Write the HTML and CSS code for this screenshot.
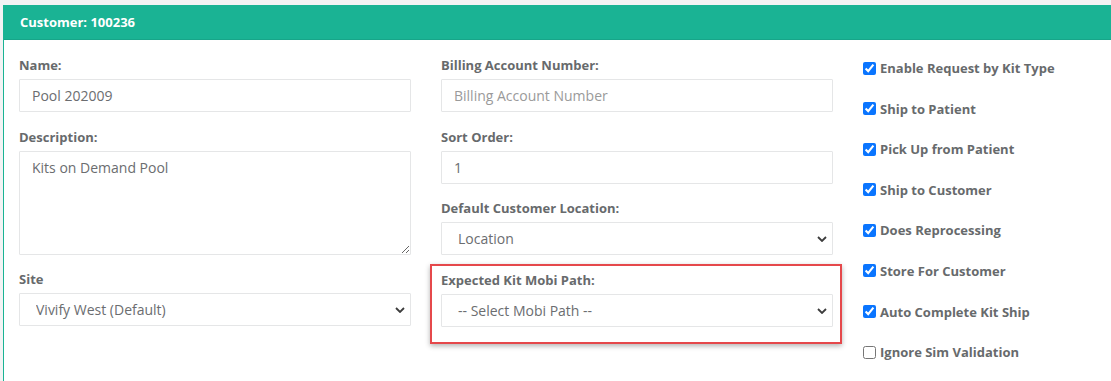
FILE: index.html
```html
<!DOCTYPE html>
<html lang="en">
<head>
  <meta charset="UTF-8" />
  <title>Customer 100236</title>
  <link rel="stylesheet" href="styles.css">
</head>
<body>
  <section class="card">
    <header class="card-head">Customer: 100236</header>

    <form class="card-body">
      <div class="col">
        <div class="form-group">
          <label>Name:</label>
          <input class="field" type="text" value="Pool 202009">
        </div>
        <div class="form-group">
          <label>Description:</label>
          <textarea class="field area">Kits on Demand Pool</textarea>
        </div>
        <div class="form-group">
          <label>Site</label>
          <div class="select-wrap">
            <select class="field">
              <option>Vivify West (Default)</option>
            </select>
            <svg class="chev" viewBox="0 0 10 6" width="10" height="6"><path d="M1 1l4 4 4-4" fill="none" stroke="#3c3c3c" stroke-width="1.8"/></svg>
          </div>
        </div>
      </div>

      <div class="col">
        <div class="form-group">
          <label>Billing Account Number:</label>
          <input class="field" type="text" placeholder="Billing Account Number">
        </div>
        <div class="form-group">
          <label>Sort Order:</label>
          <input class="field" type="text" value="1">
        </div>
        <div class="form-group">
          <label>Default Customer Location:</label>
          <div class="select-wrap">
            <select class="field">
              <option>Location</option>
            </select>
            <svg class="chev" viewBox="0 0 10 6" width="10" height="6"><path d="M1 1l4 4 4-4" fill="none" stroke="#3c3c3c" stroke-width="1.8"/></svg>
          </div>
        </div>
        <div class="form-group marked">
          <label>Expected Kit Mobi Path:</label>
          <div class="select-wrap">
            <select class="field">
              <option>-- Select Mobi Path --</option>
            </select>
            <svg class="chev" viewBox="0 0 10 6" width="10" height="6"><path d="M1 1l4 4 4-4" fill="none" stroke="#3c3c3c" stroke-width="1.8"/></svg>
          </div>
        </div>
      </div>

      <div class="col checks">
        <label class="check"><input type="checkbox" checked> Enable Request by Kit Type</label>
        <label class="check"><input type="checkbox" checked> Ship to Patient</label>
        <label class="check"><input type="checkbox" checked> Pick Up from Patient</label>
        <label class="check"><input type="checkbox" checked> Ship to Customer</label>
        <label class="check"><input type="checkbox" checked> Does Reprocessing</label>
        <label class="check"><input type="checkbox" checked> Store For Customer</label>
        <label class="check"><input type="checkbox" checked> Auto Complete Kit Ship</label>
        <label class="check"><input type="checkbox"> Ignore Sim Validation</label>
      </div>
    </form>
  </section>
</body>
</html>
```

FILE: styles.css
```css
* { box-sizing: border-box; }

body {
  margin: 0;
  padding: 5px 0 0 3px;
  background: #f3f3f4;
  font-family: 'Open Sans', 'Liberation Sans', sans-serif;
  color: #676a6c;
  overflow: hidden;
}

.card {
  width: 1320px;
  background: #fff;
  border-left: 1px solid #1ab394;
  min-height: 400px;
}

.card-head {
  background: #1ab394;
  color: #fff;
  font-size: 13px;
  font-weight: 700;
  height: 35px;
  line-height: 35px;
  padding: 0 16px;
  border-bottom: 1px solid #17a589;
}

.card-body {
  display: grid;
  grid-template-columns: 392px 392px 392px;
  column-gap: 30px;
  padding: 16px 15px 20px;
}

label {
  display: block;
  font-size: 13px;
  font-weight: 700;
  line-height: 18px;
  margin-bottom: 5px;
}

.form-group {
  margin-bottom: 15.5px;
  position: relative;
}

.field {
  display: block;
  width: 100%;
  height: 33px;
  border: 1px solid #e5e6e7;
  border-radius: 1px;
  padding: 0 12px;
  font-family: inherit;
  font-size: 14px;
  color: #6b6d70;
  background: #fff;
  outline: none;
}
.field::placeholder { color: #9a9a9a; }

.area {
  height: 104px;
  padding: 6px 12px;
  line-height: 20px;
  resize: vertical;
}

.select-wrap { position: relative; }
select.field {
  appearance: none;
  padding-left: 16px;
}
.chev {
  position: absolute;
  right: 6px;
  top: 14px;
  pointer-events: none;
}

/* red annotation frame */
.marked::after {
  content: "";
  position: absolute;
  left: -11px;
  right: -9px;
  top: -7px;
  bottom: -17px;
  border: 2px solid #e5484b;
  box-shadow: 0 2px 5px rgba(0, 0, 0, 0.3);
  pointer-events: none;
}

.checks { padding-top: 3px; }
.check {
  display: flex;
  align-items: center;
  height: 18px;
  margin-bottom: 22.6px;
}
.check input {
  width: 13px;
  height: 13px;
  margin: 0 4px 0 0;
  accent-color: #0a75ff;
}
```
